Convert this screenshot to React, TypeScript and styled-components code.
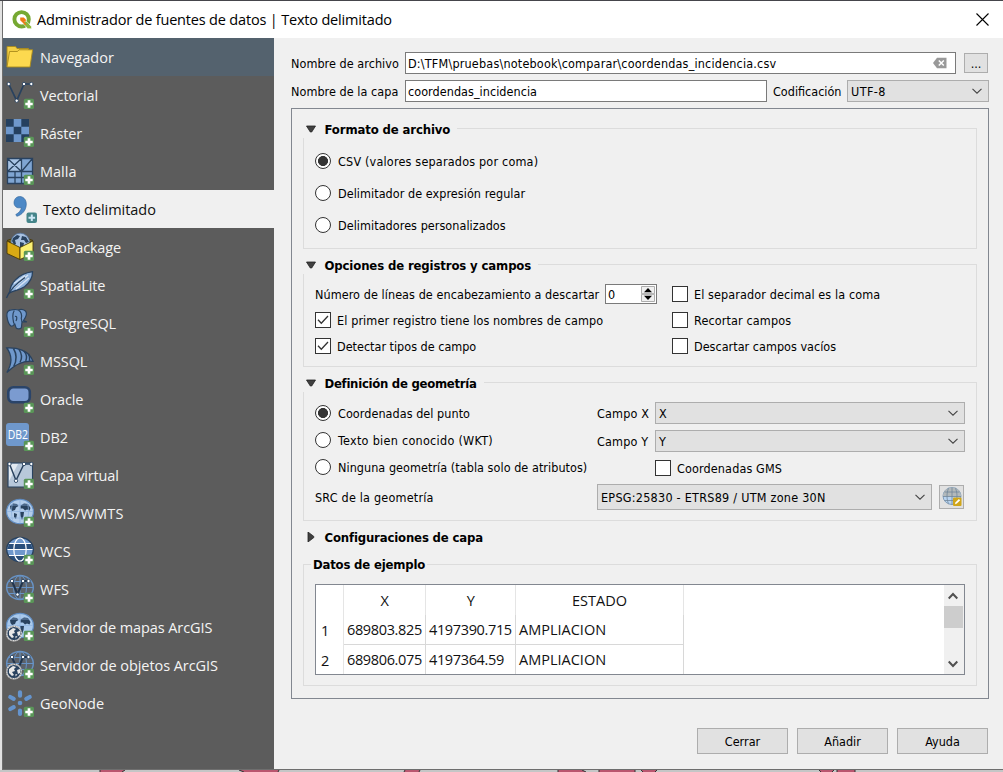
import React from 'react';
import styled, { createGlobalStyle, css } from 'styled-components';

const GlobalStyle = createGlobalStyle`
  *, *::before, *::after { box-sizing: border-box; }
  html, body { margin: 0; padding: 0; }
  body { background: #c9c9c9; overflow: hidden; }
`;

const tahoma = css`
  font-family: 'DejaVu Sans Condensed', 'DejaVu Sans', 'Noto Sans', sans-serif;
  font-stretch: condensed;
  font-size: 12.5px;
`;

const segoe = css`
  font-family: 'Open Sans', 'Noto Sans', sans-serif;
  font-size: 14.5px;
`;

/* ---------- window ---------- */

const Desktop = styled.div`
  width: 1003px;
  height: 772px;
  overflow: hidden;
  background: #e2e2e2;
  display: flex;
  flex-direction: column;
  border-top: 1px solid #45454b;
`;

const Window = styled.div`
  margin-left: 2px;
  height: 769px;
  display: flex;
  flex-direction: column;
  border-left: 1px solid #6e6e6e;
  border-bottom: 1px solid #6e6e6e;
  background: #f0f0f0;
`;

const TitleBar = styled.header`
  height: 37px;
  flex: none;
  background: #fff;
  display: flex;
  align-items: center;
  padding: 0 14px 0 9px;
`;

const TitleText = styled.h1`
  ${segoe}
  flex: 1;
  margin: 0 0 0 5px;
  font-weight: 400;
  color: #000;
  white-space: nowrap;
  letter-spacing: -0.18px;
`;

const Columns = styled.div`
  flex: 1;
  min-height: 0;
  display: flex;
`;

/* ---------- sidebar ---------- */

const Sidebar = styled.nav`
  width: 271px;
  flex: none;
  background: #5c5c5c;
`;

const NavItem = styled.div<{ $state?: 'hover' | 'current'; $ls?: number }>`
  ${segoe}
  height: 38px;
  display: flex;
  align-items: center;
  gap: 6px;
  padding-left: ${p => (p.$state === 'current' ? 6 : 3)}px;
  white-space: nowrap;
  letter-spacing: ${p => p.$ls ?? -0.1}px;
  color: ${p => (p.$state === 'current' ? '#111' : '#f4f4f4')};
  background: ${p =>
    p.$state === 'current' ? '#f0f0f0' : p.$state === 'hover' ? '#54626e' : 'transparent'};
`;

const NavIcon = styled.svg`
  width: 28px;
  height: 28px;
  flex: none;
  overflow: visible;
`;

/* ---------- form pieces ---------- */

const Main = styled.main`
  flex: 1;
  min-width: 0;
  padding: 14px 14px 0 17px;
  display: flex;
  flex-direction: column;
`;

const Row = styled.div<{ $h: number; $mt?: number; $gap?: number }>`
  display: flex;
  align-items: center;
  height: ${p => p.$h}px;
  margin-top: ${p => p.$mt ?? 0}px;
  gap: ${p => p.$gap ?? 0}px;
`;

const Label = styled.span<{ $w?: number; $ls?: number }>`
  ${tahoma}
  color: #000;
  white-space: nowrap;
  flex: none;
  width: ${p => (p.$w ? p.$w + 'px' : 'auto')};
  letter-spacing: ${p => p.$ls ?? 0.05}px;
`;

const LineEdit = styled.div<{ $w: number }>`
  width: ${p => p.$w}px;
  height: 22px;
  flex: none;
  display: flex;
  align-items: center;
  justify-content: space-between;
  padding: 0 8px 0 2px;
  border: 1px solid #7a7a7a;
  background: #fff;
`;

const Combo = styled.div<{ $w: number; $h?: number }>`
  width: ${p => p.$w}px;
  height: ${p => p.$h ?? 22}px;
  flex: none;
  display: flex;
  align-items: center;
  justify-content: space-between;
  padding: 0 6px 0 3px;
  border: 1px solid #adadad;
  background: #e1e1e1;
`;

const Chevron = () => (
  <svg width="10" height="6" viewBox="0 0 10 6" fill="none" stroke="#444" strokeWidth="1.1">
    <path d="M0.5 0.8 5 5.200 9.500 0.8" />
  </svg>
);

const ToolButton = styled.div<{ $w: number; $h: number }>`
  ${tahoma}
  width: ${p => p.$w}px;
  height: ${p => p.$h}px;
  flex: none;
  display: flex;
  align-items: center;
  justify-content: center;
  border: 1px solid #adadad;
  background: #e1e1e1;
`;

const PushButton = styled.button`
  ${tahoma}
  width: 91px;
  height: 26px;
  padding: 0;
  border: 1px solid #adadad;
  background: #e1e1e1;
  color: #000;
`;

const Radio = styled.span<{ $on?: boolean }>`
  width: 16px;
  height: 16px;
  flex: none;
  border: 1px solid #333;
  border-radius: 50%;
  background: ${p => (p.$on ? 'radial-gradient(circle, #333 4.7px, #fff 5.3px)' : '#fff')};
`;

const CheckBox = styled.span`
  width: 16px;
  height: 16px;
  flex: none;
  display: flex;
  align-items: center;
  justify-content: center;
  border: 1px solid #333;
  background: #fff;
`;

const Tick = () => (
  <svg width="12" height="10" viewBox="0 0 12 10" fill="none" stroke="#333" strokeWidth="1.3">
    <path d="M1 4.800 4.300 8.200 11 1" />
  </svg>
);

const SpinBox = styled.div`
  width: 52px;
  height: 20px;
  margin-left: 6px;
  flex: none;
  display: flex;
  align-items: center;
  justify-content: space-between;
  padding: 0 1px 0 2px;
  border: 1px solid #7a7a7a;
  background: #fff;
`;

/* ---------- groups ---------- */

const Panel = styled.section`
  width: 698px;
  height: 591px;
  margin-top: 6px;
  flex: none;
  border: 1px solid #828790;
  padding: 19px 11px 0;
`;

const Group = styled.section<{ $h: number; $mt?: number }>`
  height: ${p => p.$h}px;
  margin-top: ${p => p.$mt ?? 0}px;
  border: 1px solid #dcdcdc;
`;

const GroupTitle = styled.h2<{ $plain?: boolean; $ls?: number }>`
  ${tahoma}
  font-size: 13px;
  font-weight: 700;
  width: fit-content;
  height: 18px;
  margin: ${p => (p.$plain ? '-10px 0 0 7px' : '-9px 0 0 -1px')};
  padding: ${p => (p.$plain ? '0 2px' : '0 7px 0 3px')};
  display: flex;
  align-items: center;
  gap: 8.5px;
  white-space: nowrap;
  color: #000;
  background: #f0f0f0;
  letter-spacing: ${p => p.$ls ?? -0.13}px;
`;

const LayerSettings = styled.div`
  height: 43px;
  padding: 16px 0 0 1px;
`;

const GroupBody = styled.div`
  padding: 0 11px;
`;

const Split = styled.div<{ $left: number }>`
  display: grid;
  grid-template-columns: ${p => p.$left}px 1fr;
`;

const Stack = styled.div`
  display: flex;
  flex-direction: column;
`;

const Arrow = ({ open }: { open?: boolean }) => (
  <svg width="10" height="10" viewBox="0 0 10 10">
    <path
      d={open ? 'M0.5 2H9.500L5.700 8H4.300Z' : 'M2 0V10L7.800 5.600V4.400Z'}
      fill="#404040"
      stroke="#222"
      strokeWidth="0.8"
    />
  </svg>
);

/* ---------- table ---------- */

const TableView = styled.div`
  height: 91px;
  display: flex;
  justify-content: space-between;
  border: 1px solid #828790;
  background: #fff;
  margin-top: 11px;
`;

const Grid = styled.div`
  ${segoe}
  display: grid;
  grid-template-columns: 28px 82px 90px 168px;
  grid-template-rows: 30px 30px 29px;
  color: #111;
  letter-spacing: -0.36px;
`;

const Cell = styled.div<{ $kind?: 'head' | 'index'; $last?: boolean; $text?: boolean }>`
  display: flex;
  align-items: center;
  justify-content: ${p => (p.$kind === 'head' ? 'center' : 'flex-start')};
  padding: ${p => (p.$kind === 'index' ? '1px 0 0 5px' : '0 0 0 3px')};
  padding-left: ${p => (p.$kind === 'head' ? '0' : undefined)};
  border-right: 1px solid ${p => (p.$kind ? '#e5e5e5' : '#d8d8d8')};
  border-bottom: ${p => (p.$kind || p.$last ? 'none' : '1px solid #d8d8d8')};
  white-space: nowrap;
  letter-spacing: ${p => (p.$text ? '0' : 'inherit')};
`;

const ScrollBar = styled.div`
  width: 20px;
  display: flex;
  flex-direction: column;
  background: #f0f0f0;
`;

const ScrollArrow = styled.div`
  height: 21px;
  padding-right: 2px;
  display: flex;
  align-items: center;
  justify-content: center;
`;

const Thumb = styled.div`
  width: 19px;
  height: 22px;
  margin-bottom: 25px;
  background: #cdcdcd;
`;

const Footer = styled.footer`
  display: flex;
  justify-content: flex-end;
  gap: 9px;
  margin-top: 29px;
  padding-right: 1px;
`;

/* ---------- icons ---------- */

const DARK = '#29425f';
const BLUE = '#6f98cc';

const Plus = ({ fill = '#5a9658' }: { fill?: string }) => (
  <g stroke="none">
    <rect x="17.800" y="17.800" width="10.200" height="10.200" rx="1.600" fill={fill} />
    <path d="M23 19.300v7.400M19.300 23h7.400" stroke="#fff" strokeWidth="2.700" strokeLinecap="butt" />
  </g>
);

const Nodes = ({ pts }: { pts: number[][] }) => (
  <>
    {pts.map(([x, y]) => (
      <circle key={`${x}-${y}`} cx={x} cy={y} r="1.700" fill="#fff" stroke={DARK} strokeWidth="0.900" />
    ))}
  </>
);

const Continents = () => (
  <path
    d="M4 7l3-2.500 4 .5 1.500 2-2.500 1.500-1 2.500-3 1-1.500-2zM14.500 6.500l3.500-2 4 .5 2.500 4-1 2.500-2.500-1-2 1-2-2-2.500 0zM14 13l4 0-.5 4-1.500 4-1.500-4zM8 14l3 1-1 5-2-2z"
    fill={DARK}
  />
);

const WebGlobe = ({ stroke, fill }: { stroke: string; fill: string }) => (
  <g fill="none" stroke={stroke} strokeWidth="1">
    <ellipse cx="14" cy="12.500" rx="13.300" ry="12" fill={fill} strokeWidth="1.400" />
    <ellipse cx="14" cy="12.500" rx="6.500" ry="12" />
    <path d="M1 12.500h26M3 6.500h22M3 18.500h22M14 .5v24" />
  </g>
);

const ArcGlobe = () => (
  <g>
    <circle cx="8" cy="20.500" r="7.300" fill={DARK} stroke="#e8e8e8" strokeWidth="1.400" />
    <circle cx="8" cy="20.500" r="7.300" fill="none" stroke="#555" strokeWidth="0.700" strokeDasharray="1.500 1" />
    <path d="M3 18l4-3 3 1-2 2 1 2-3 1 2 3-2 1-3-3zM11 19l3-1 0 4-2 1zM9.500 23l2 .5-2 2z" fill="#e8e8e8" />
  </g>
);

const icons: Record<string, React.ReactNode> = {
  folder: (
    <g stroke="#a98a1c" strokeWidth="0.900" strokeLinejoin="round">
      <path d="M1 24V3.500h8.500l1.500 2h11.500V9" fill="#f3cf45" />
      <path d="M1 24 3.500 8.500h8l1.500-1.700h13.600L24 24Z" fill="#fcd94f" />
    </g>
  ),
  vector: (
    <g>
      <path d="M2.700 3 10.700 19.700 18 3h7.300" fill="none" stroke={DARK} strokeWidth="1.700" />
      <Nodes pts={[[2.7, 3], [10.7, 19.7], [18, 3], [25.3, 3]]} />
      <Plus />
    </g>
  ),
  raster: (
    <g>
      <path d="M0 0h23v23H0Z" fill={BLUE} />
      <path d="M0 0h7.700v7.700H0ZM15.300 0H23v7.700h-7.700ZM7.700 7.700h7.600v7.600H7.700ZM0 15.300h7.700V23H0ZM15.300 15.300H23V23h-7.700Z" fill="#25405f" />
      <Plus />
    </g>
  ),
  mesh: (
    <g>
      <path d="M1.500 1.500h25v25h-25Z" fill="#7fa5d2" />
      <path d="M1.500 1.500h14v13h-14Z" fill="#a9c4e4" />
      <path d="M1.500 1.500h25v25h-25ZM15.500 1.500v13M1.500 14.500h25M1.500 1.500l14 13M15.500 1.500l-14 13M26.500 1.500l-11 13M1.500 20.500h25M9 14.500v12M15.500 14.500v12" fill="none" stroke={DARK} strokeWidth="1.300" />
      <Plus />
    </g>
  ),
  comma: (
    <g>
      <path d="M7.500 2.500C11 0 17.300 2.300 17.300 9c0 6.500-4.500 11-9.500 12.300l-1-1.800c3.400-1.800 5.300-4.200 5.500-7.200C8.500 14 5 11.500 5 7.800c0-2.300 1-4.300 2.500-5.300Z" fill="#4c88c6" stroke="#2e6298" strokeWidth="0.600" />
      <rect x="17.500" y="17.500" width="10.500" height="10.500" rx="2" fill="#45858a" />
      <path d="M22.800 19.500v6.600M19.500 22.800h6.600" stroke="#cde8f6" strokeWidth="2" />
    </g>
  ),
  geopackage: (
    <g strokeLinejoin="round">
      <path d="M1 7.500 14 3l13 4.500L14 14Z" fill="#7a6a20" stroke="#4a3b08" />
      <circle cx="14.300" cy="9.500" r="9.300" fill="#a9c2e2" stroke="#5b7ba6" strokeWidth="0.800" />
      <path d="M7 5l4-3 3 1-2 3-3 1 1 4-2 1-2-4zM16 3l4 1 3 5-3 1-2-3-3 0zM14 9l4 1-1 5-3-1z" fill={DARK} />
      <path d="M1 8 14 14.500V26.500L1 20.500Z" fill="#d9aa14" stroke="#4a3b08" strokeWidth="0.900" />
      <path d="M14 14.500 27 8V20.500L14 26.500Z" fill="#fbf073" stroke="#4a3b08" strokeWidth="0.900" />
      <Plus />
    </g>
  ),
  feather: (
    <g>
      <path d="M3.500 22C4 13 11 3 26.500.7c.2 6-3 11-8 15C13.500 19.500 8 19 3.500 22Z" fill="#8fb2dc" stroke={DARK} strokeWidth="1.300" />
      <path d="M8 16.500 22 4M10 18 23 7M8 12.500l11-8" stroke="#d3e2f4" strokeWidth="1.500" />
      <path d="M.5 27C3 20 9 13.500 19 6.500" fill="none" stroke={DARK} strokeWidth="1.300" />
      <Plus />
    </g>
  ),
  elephant: (
    <g fill={BLUE} stroke={DARK} strokeWidth="1.200" strokeLinejoin="round">
      <path d="M5.500.8C2 .8.500 3.500.900 7c.5 4 1.800 8.500 4 10 1.500.800 3-1 3.800-2.300L10 18.600c.3 1.700 5.300 2 5.500-.6l.5-5.200h4.500l-3-1.300C20 8 21.200 4 19.500 2 17 .2 14 .4 12.500 1 10 .2 8 .4 5.500.8Z" />
      <path d="M7.800 14.500C6.500 9 6 5 8.300 1.500M12.500 1.200c2.800 1.500 3.500 4.800 2.800 8.300l.7 3.300M9 7.500c2-1 2.300 2 1 4.500" fill="none" />
      <Plus />
    </g>
  ),
  sail: (
    <g>
      <path d="M.8 1C10 .3 23 3 27 14.300 16 13 8 18.500.800 25.500 6 17 6 8 .8 1Z" fill={BLUE} stroke={DARK} strokeWidth="1.300" />
      <path d="M7.500 1.500c3.500 6 3 12.500.3 17.800M13 2.300c3.300 4.800 3 9.500 1 13.200M18 4c3 3.500 3 7 1.800 10M22.500 7c1.300 2 1.500 4.500 1 6.800" fill="none" stroke={DARK} strokeWidth="1.500" />
      <Plus />
    </g>
  ),
  oracle: (
    <g>
      <rect x="2.300" y="2.300" width="21.500" height="15" rx="5" fill="#7b9bd0" stroke="#2a4469" strokeWidth="2.600" />
      <Plus />
    </g>
  ),
  db2: (
    <g>
      <rect x="0" y="0" width="23" height="23" rx="3" fill={BLUE} />
      <text x="1.800" y="16.300" fontFamily="'Open Sans', sans-serif" fontSize="13.500" textLength="20" lengthAdjust="spacingAndGlyphs" fill="#fff">
        DB2
      </text>
      <Plus />
    </g>
  ),
  virtual: (
    <g>
      <path d="M2 2h24.500v24H2Z" fill="#b8c8da" stroke={DARK} strokeWidth="1.100" />
      <path d="M3 3h9L3 20Z" fill="#e3eaf1" />
      <path d="M3.500 3 10 19.500 18 3h7.300" fill="none" stroke={DARK} strokeWidth="1.500" />
      <Nodes pts={[[3.5, 3], [10, 19.8], [18, 3], [25.3, 3]]} />
      <Plus />
    </g>
  ),
  wms: (
    <g>
      <ellipse cx="14" cy="12.500" rx="13.500" ry="12.200" fill="#b3cdeb" stroke="#5f8cc2" strokeWidth="1.200" />
      <Continents />
      <path d="M1 12.500h26M3.500 6h21M3.500 19h21M14 .5v24M7 2.500c-2 6-2 14 0 20M21 2.500c2 6 2 14 0 20" fill="none" stroke="#8fb3df" strokeWidth="0.700" />
      <Plus />
    </g>
  ),
  wcs: (
    <g>
      <ellipse cx="14" cy="12.500" rx="13.300" ry="12" fill={BLUE} stroke={DARK} strokeWidth="1.400" />
      <path d="M3.200 6.500h21.600l2 6H1.300ZM3 18.500h22l-4 4.500-7 1.500-7-1.500Z" fill="#2b4f7b" />
      <ellipse cx="14" cy="12.500" rx="6.200" ry="11.500" fill="none" stroke="#fff" strokeWidth="1.200" />
      <path d="M1.500 12.500h25M3.200 6.500h21.600M3 18.500h22" stroke="#fff" strokeWidth="1.200" />
      <Plus />
    </g>
  ),
  wfs: (
    <g>
      <WebGlobe stroke="#6793c6" fill="#5c626a" />
      <path d="M6 6 11.500 19.500 17 6h5.500" fill="none" stroke="#22354d" strokeWidth="2" />
      <Nodes pts={[[6, 6], [11.5, 19.5], [17, 6], [22.5, 6]]} />
      <Plus />
    </g>
  ),
  arcmap: (
    <g>
      <ellipse cx="14" cy="12.500" rx="13.500" ry="12.200" fill="#a9c9ec" stroke="#5f8cc2" strokeWidth="1.200" />
      <Continents />
      <path d="M1 12.500h26M3.500 6h21M14 .5v24" stroke="#8fb3df" strokeWidth="0.700" />
      <ArcGlobe />
      <Plus />
    </g>
  ),
  arcfeature: (
    <g>
      <WebGlobe stroke="#6793c6" fill="#5c626a" />
      <path d="M6 6 11.500 19.500 17 6h5.500" fill="none" stroke="#22354d" strokeWidth="2" />
      <Nodes pts={[[6, 6], [17, 6], [22.5, 6]]} />
      <ArcGlobe />
      <Plus />
    </g>
  ),
  geonode: (
    <g>
      <path
        d="M14 3.300v3.400M14 21.500v3.400M4.300 8l3.400 1.800M23.700 8l-3.400 1.800M4.300 20l3.400-1.800"
        stroke="#6594cd"
        strokeWidth="4.200"
        strokeLinecap="round"
      />
      <circle cx="14" cy="14" r="2.300" fill="#6594cd" />
      <Plus />
    </g>
  ),
};

const sources: { icon: string; name: string; state?: 'hover' | 'current'; ls?: number }[] = [
  { icon: 'folder', name: 'Navegador', state: 'hover', ls: 0 },
  { icon: 'vector', name: 'Vectorial' },
  { icon: 'raster', name: 'Ráster', ls: -0.2 },
  { icon: 'mesh', name: 'Malla', ls: 0 },
  { icon: 'comma', name: 'Texto delimitado', state: 'current', ls: -0.05 },
  { icon: 'geopackage', name: 'GeoPackage', ls: -0.2 },
  { icon: 'feather', name: 'SpatiaLite' },
  { icon: 'elephant', name: 'PostgreSQL', ls: -0.25 },
  { icon: 'sail', name: 'MSSQL' },
  { icon: 'oracle', name: 'Oracle' },
  { icon: 'db2', name: 'DB2' },
  { icon: 'virtual', name: 'Capa virtual', ls: -0.15 },
  { icon: 'wms', name: 'WMS/WMTS', ls: 0.2 },
  { icon: 'wcs', name: 'WCS', ls: 0.1 },
  { icon: 'wfs', name: 'WFS', ls: 0.1 },
  { icon: 'arcmap', name: 'Servidor de mapas ArcGIS' },
  { icon: 'arcfeature', name: 'Servidor de objetos ArcGIS', ls: -0.06 },
  { icon: 'geonode', name: 'GeoNode', ls: 0 },
];

const rows = [
  ['689803.825', '4197390.715', 'AMPLIACION'],
  ['689806.075', '4197364.59', 'AMPLIACION'],
];

const QLogo = () => (
  <svg width="20" height="20" viewBox="0 0 20 20">
    <circle cx="9.600" cy="9.300" r="7.200" fill="none" stroke="#76a832" strokeWidth="3.900" />
    <path d="M11.500 11.500h3.400l4.600 5.200v2h-3.800l-4.200-4.700Z" fill="#8cb83a" stroke="#fff" strokeWidth="0.600" />
    <path d="M8.200 7.600h3.600l2 1.900v2.200h-2l2.500 2.600-1 .9-3.300-3.200-1.800-1.700Z" fill="#ee7913" />
  </svg>
);

const ClearIcon = () => (
  <svg width="14" height="12" viewBox="0 0 14 12">
    <path d="M0 6 4 .8h9.500v10.400H4Z" fill="#999" />
    <path d="M5.800 3.500l5 5M10.800 3.500l-5 5" stroke="#fff" strokeWidth="1.500" />
  </svg>
);

const CrsIcon = () => (
  <svg width="20" height="20" viewBox="0 0 20 20">
    <ellipse cx="10" cy="9" rx="9" ry="8.500" fill="#b9d4f0" stroke="#6f8fb0" strokeWidth="0.800" />
    <path d="M1 9.500C1 4 5 .5 10 .5s9 3.500 9 9Z" fill="#b3b9bb" />
    <path d="M1 9.500h18M2.500 5h15M10 .5v17M6.500 1.200c-2 5-2 11 0 15.500M13.500 1.200c2 5 2 11 0 15.500M2.500 13.500h15" fill="none" stroke="#71869a" strokeWidth="0.800" />
    <rect x="11" y="10.500" width="8.500" height="8.500" rx="1" fill="#d0a61b" />
    <path d="M13 17.300l.6-2 3.300-3.300 1.300 1.300-3.300 3.300Z" fill="#fff" />
  </svg>
);

const SpinArrows = () => (
  <svg width="14" height="16" viewBox="0 0 14 16">
    <path d="M.5.5h13v7.200H.5ZM.5 8.300h13v7.200H.5Z" fill="#f0f0f0" stroke="#adadad" />
    <path d="M3 6.200h8L7 2ZM3 9.800h8L7 14Z" fill="#000" />
  </svg>
);

const MapStrip = () => (
  <svg width="1003" height="2" viewBox="0 0 1003 2">
    <path d="M0 0h1003v2H0Z" fill="#c4c6c6" />
    <path d="M100 0h25l-3 2h-22ZM239 0h40l-1 2h-34ZM405 0h15l-1 2h-15ZM558 0h24l4 2h-28ZM599 0h36v2h-36ZM641 0h16l-2 2h-12ZM819 0h15l-2 2h-11ZM837 0h18v2h-18Z" fill="#b9566f" />
    <path d="M100 0v2M125 0l-3 2M239 0l5 2M279 0l-1 2M405 0l-1 2M420 0l-1 2M558 0v2M582 0l4 2M599 0v2M635 0v2M641 0l2 2M657 0l-2 2M819 0l2 2M834 0l-2 2M837 0v2M855 0v2" stroke="#333" strokeWidth="1" />
  </svg>
);

const Option = ({ on, text, h, mt, ls }: { on?: boolean; text: string; h: number; mt?: number; ls?: number }) => (
  <Row $h={h} $mt={mt} $gap={7}>
    <Radio $on={on} />
    <Label $ls={ls}>{text}</Label>
  </Row>
);

const Check = ({ on, text, h = 26, ls }: { on?: boolean; text: string; h?: number; ls?: number }) => (
  <Row $h={h} $gap={6}>
    <CheckBox>{on && <Tick />}</CheckBox>
    <Label $ls={ls}>{text}</Label>
  </Row>
);

export default function App() {
  return (
    <>
      <GlobalStyle />
      <Desktop>
        <Window>
          <TitleBar>
            <QLogo />
            <TitleText>Administrador de fuentes de datos | Texto delimitado</TitleText>
            <svg width="13" height="13" viewBox="0 0 13 13" stroke="#000" strokeWidth="1.1">
              <path d="M.5.5l12 12M12.500.5l-12 12" />
            </svg>
          </TitleBar>
          <Columns>
            <Sidebar>
              {sources.map(s => (
                <NavItem key={s.name} $state={s.state} $ls={s.ls}>
                  <NavIcon viewBox="0 0 28 28">{icons[s.icon]}</NavIcon>
                  {s.name}
                </NavItem>
              ))}
            </Sidebar>
            <Main>
              <Row $h={22}>
                <Label $w={114}>Nombre de archivo</Label>
                <LineEdit $w={551}>
                  <Label $ls={0.19}>D:\TFM\pruebas\notebook\comparar\coordendas_incidencia.csv</Label>
                  <ClearIcon />
                </LineEdit>
                <Row $h={22} $gap={8}>
                  <span />
                  <ToolButton $w={24} $h={20}>...</ToolButton>
                </Row>
              </Row>
              <Row $h={22} $mt={6}>
                <Label $w={114}>Nombre de la capa</Label>
                <LineEdit $w={362}>
                  <Label>coordendas_incidencia</Label>
                </LineEdit>
                <Row $h={22} $gap={6}>
                  <span />
                  <Label $w={68} $ls={0}>Codificación</Label>
                  <Combo $w={142}>
                    <Label $ls={0.4}>UTF-8</Label>
                    <Chevron />
                  </Combo>
                </Row>
              </Row>

              <Panel>
                <Group $h={121}>
                  <GroupTitle>
                    <Arrow open />
                    Formato de archivo
                  </GroupTitle>
                  <GroupBody>
                    <Option on h={32} mt={7} text="CSV (valores separados por coma)" ls={0.19} />
                    <Option h={32} text="Delimitador de expresión regular" />
                    <Option h={32} text="Delimitadores personalizados" />
                  </GroupBody>
                </Group>

                <Group $h={103} $mt={15}>
                  <GroupTitle>
                    <Arrow open />
                    Opciones de registros y campos
                  </GroupTitle>
                  <GroupBody>
                    <Row $h={7} />
                    <Split $left={357}>
                      <Stack>
                        <Row $h={26}>
                          <Label $w={284} $ls={0.07}>Número de líneas de encabezamiento a descartar</Label>
                          <SpinBox>
                            <Label>0</Label>
                            <SpinArrows />
                          </SpinBox>
                        </Row>
                        <Check on text="El primer registro tiene los nombres de campo" ls={0.11} />
                        <Check on text="Detectar tipos de campo" ls={0} />
                      </Stack>
                      <Stack>
                        <Check text="El separador decimal es la coma" ls={0.1} />
                        <Check text="Recortar campos" ls={0.13} />
                        <Check text="Descartar campos vacíos" ls={0.02} />
                      </Stack>
                    </Split>
                  </GroupBody>
                </Group>

                <Group $h={139} $mt={15}>
                  <GroupTitle $ls={-0.28}>
                    <Arrow open />
                    Definición de geometría
                  </GroupTitle>
                  <GroupBody>
                    <Row $h={7} />
                    <Split $left={282}>
                      <Stack>
                        <Option on h={28} text="Coordenadas del punto" />
                        <Option h={26} text="Texto bien conocido (WKT)" ls={0.28} />
                        <Option h={28} text="Ninguna geometría (tabla solo de atributos)" />
                      </Stack>
                      <Stack>
                        <Row $h={22} $mt={3}>
                          <Label $w={58} $ls={0.15}>Campo X</Label>
                          <Combo $w={310}>
                            <Label>X</Label>
                            <Chevron />
                          </Combo>
                        </Row>
                        <Row $h={22} $mt={6}>
                          <Label $w={58} $ls={0.15}>Campo Y</Label>
                          <Combo $w={310}>
                            <Label>Y</Label>
                            <Chevron />
                          </Combo>
                        </Row>
                        <Row $h={32}>
                          <Label $w={58} />
                          <Check h={32} text="Coordenadas GMS" ls={0.13} />
                        </Row>
                      </Stack>
                    </Split>
                    <Row $h={26}>
                      <Label $w={282} $ls={0.2}>SRC de la geometría</Label>
                      <Combo $w={335} $h={26}>
                        <Label $ls={0.25}>EPSG:25830 - ETRS89 / UTM zone 30N</Label>
                        <Chevron />
                      </Combo>
                      <Row $h={24} $gap={7}>
                        <span />
                        <ToolButton $w={25} $h={24}>
                          <CrsIcon />
                        </ToolButton>
                      </Row>
                    </Row>
                  </GroupBody>
                </Group>

                <LayerSettings>
                  <GroupTitle $ls={-0.16}>
                    <Arrow />
                    Configuraciones de capa
                  </GroupTitle>
                </LayerSettings>

                <Group $h={122}>
                  <GroupTitle $plain $ls={-0.19}>Datos de ejemplo</GroupTitle>
                  <GroupBody>
                    <TableView>
                      <Grid>
                        <Cell $kind="head" />
                        <Cell $kind="head">X</Cell>
                        <Cell $kind="head">Y</Cell>
                        <Cell $kind="head" $text>ESTADO</Cell>
                        {rows.map((r, i) => (
                          <React.Fragment key={i}>
                            <Cell $kind="index">{i + 1}</Cell>
                            {r.map((v, c) => (
                              <Cell key={v} $last={i === 1} $text={c === 2}>{v}</Cell>
                            ))}
                          </React.Fragment>
                        ))}
                      </Grid>
                      <ScrollBar>
                        <ScrollArrow>
                          <svg width="10" height="8" viewBox="0 0 10 8" fill="none" stroke="#505050" strokeWidth="2">
                            <path d="M.7 6.500 5 2 9.300 6.500" />
                          </svg>
                        </ScrollArrow>
                        <Thumb />
                        <ScrollArrow>
                          <svg width="10" height="8" viewBox="0 0 10 8" fill="none" stroke="#505050" strokeWidth="2">
                            <path d="M.7 1.500 5 6 9.300 1.500" />
                          </svg>
                        </ScrollArrow>
                      </ScrollBar>
                    </TableView>
                  </GroupBody>
                </Group>
              </Panel>

              <Footer>
                <PushButton>Cerrar</PushButton>
                <PushButton>Añadir</PushButton>
                <PushButton>Ayuda</PushButton>
              </Footer>
            </Main>
          </Columns>
        </Window>
        <MapStrip />
      </Desktop>
    </>
  );
}
